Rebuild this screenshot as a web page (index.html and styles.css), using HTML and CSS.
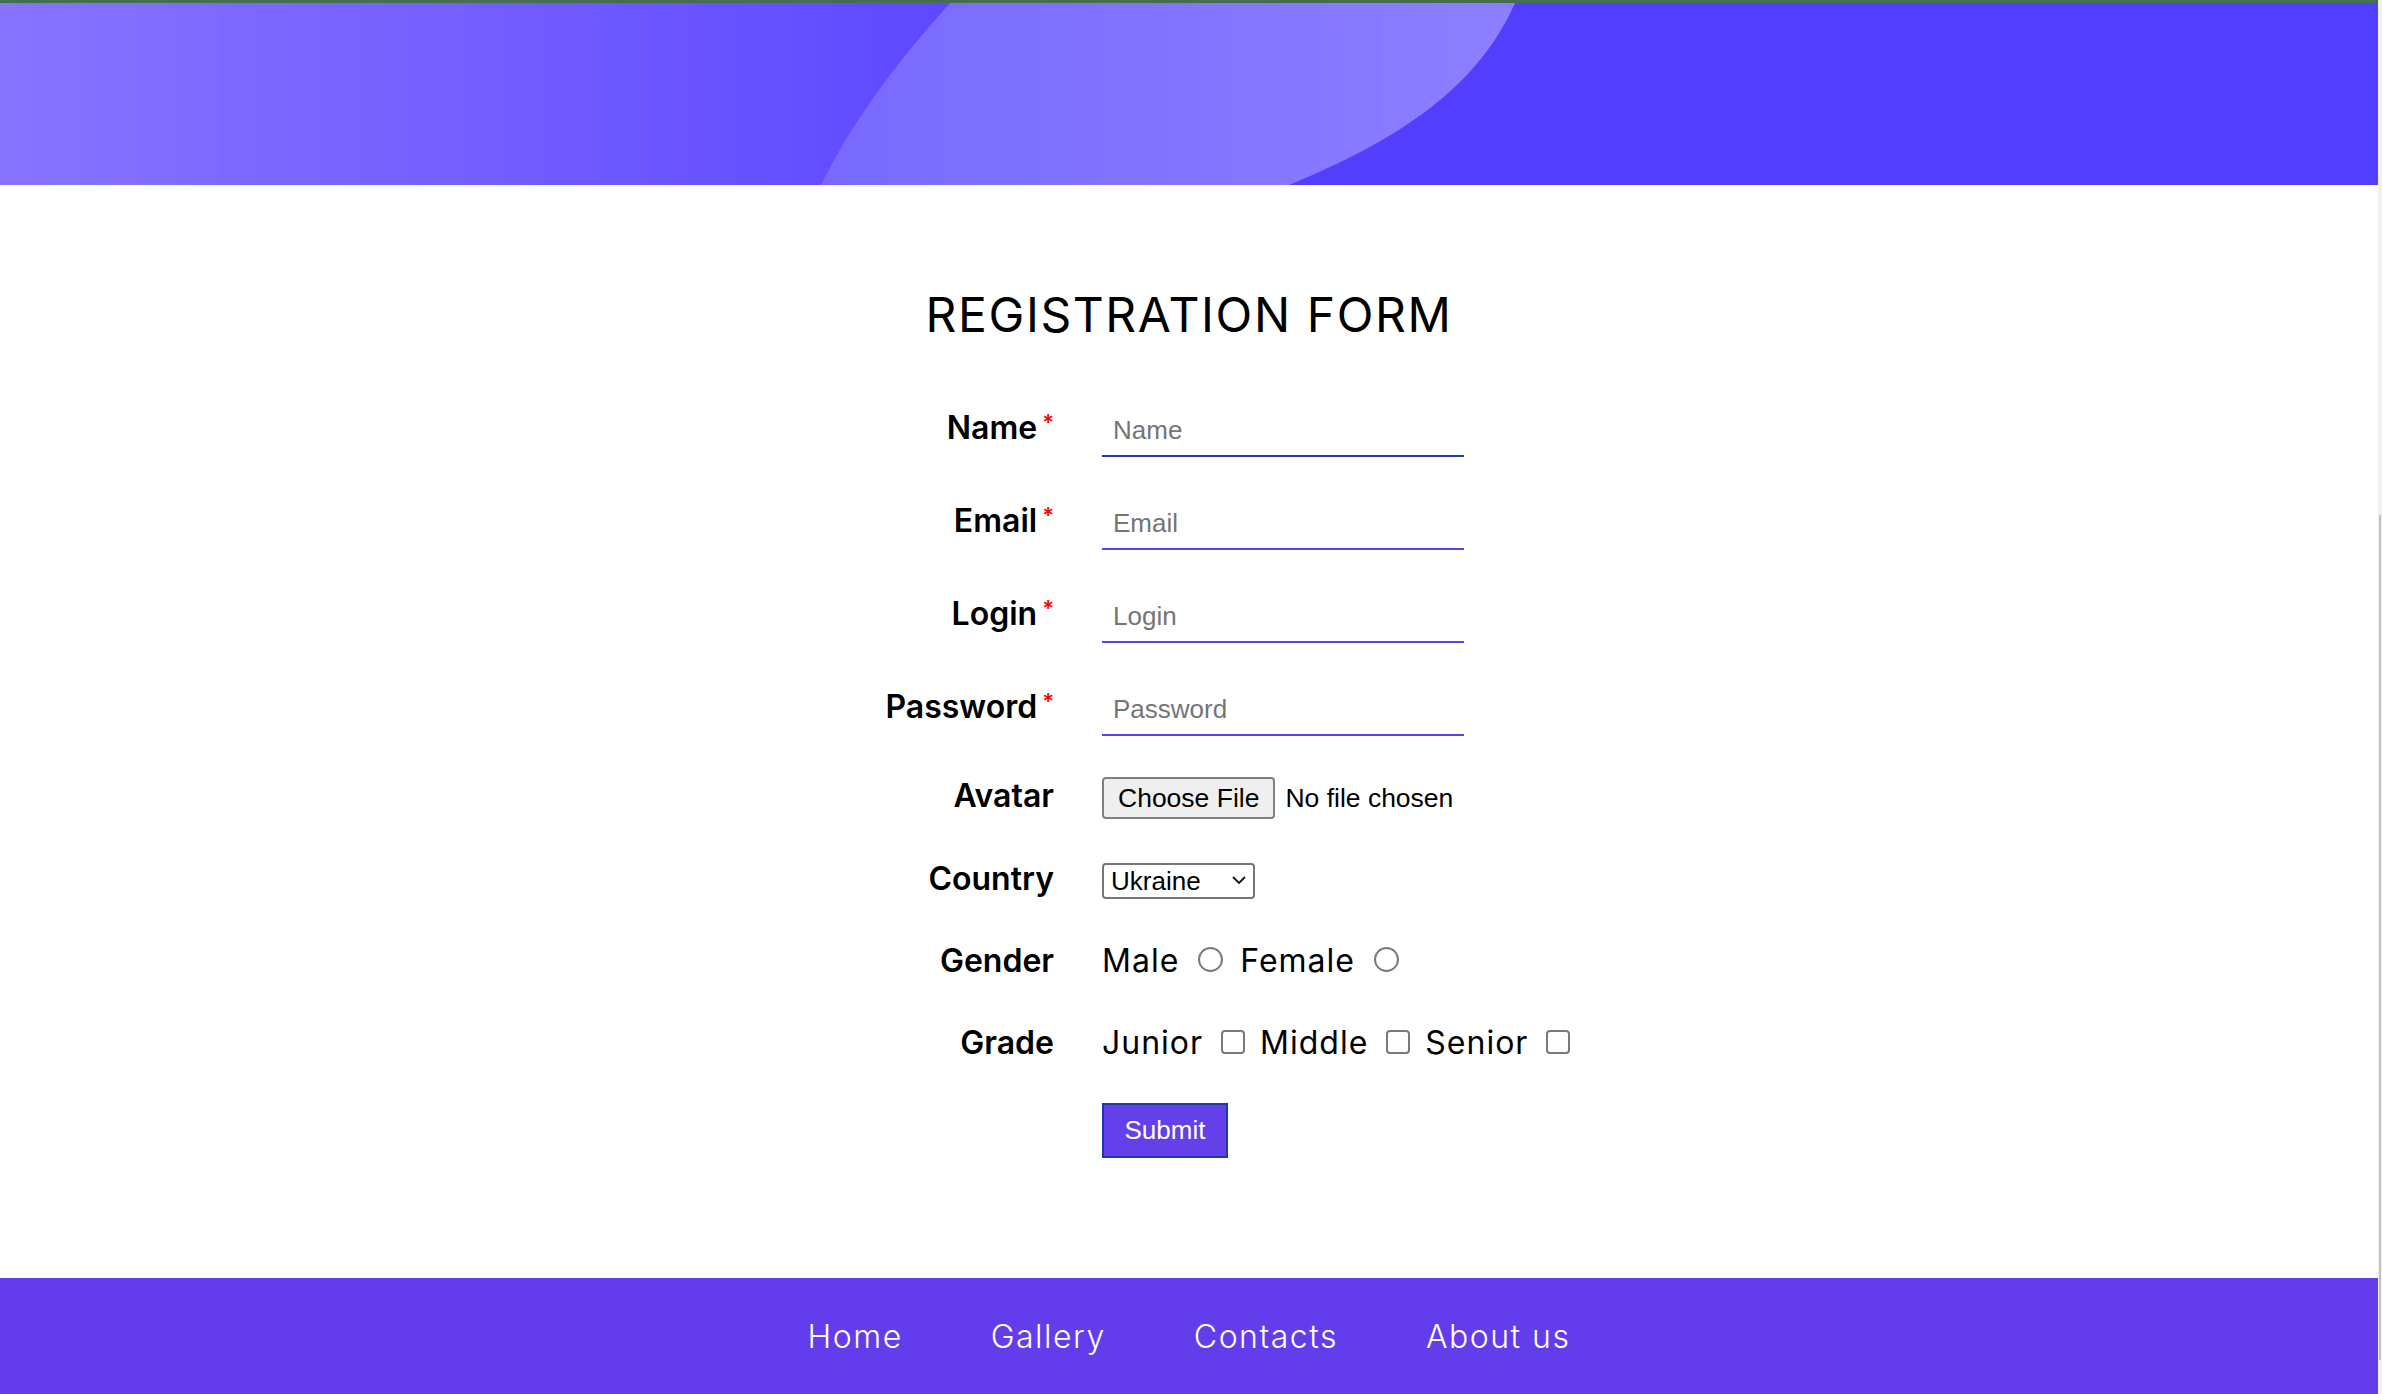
FILE: index.html
```html
<!DOCTYPE html>
<html lang="en">
<head>
<meta charset="utf-8">
<title>Registration form</title>
<link rel="stylesheet" href="styles.css">
</head>
<body>
<header class="hero">
  <svg class="hero-art" viewBox="0 0 2378 182" preserveAspectRatio="none" aria-hidden="true">
    <defs>
      <linearGradient id="gl" x1="0" y1="0" x2="1" y2="0">
        <stop offset="0" stop-color="#8874ff"/>
        <stop offset="1" stop-color="#5f48ff"/>
      </linearGradient>
      <linearGradient id="gb" x1="0" y1="0" x2="1" y2="0">
        <stop offset="0" stop-color="#786aff"/>
        <stop offset="1" stop-color="#8d7fff"/>
      </linearGradient>
    </defs>
    <rect width="2378" height="182" fill="#523eff"/>
    <path d="M0 0 H950 Q862 97 821 182 H0 Z" fill="url(#gl)"/>
    <path d="M950 0 H1515 C1475 90 1390 140 1289 182 H821 Q862 97 950 0 Z" fill="url(#gb)"/>
  </svg>
</header>

<main class="main">
  <h1 class="title">REGISTRATION FORM</h1>
  <form class="form" onsubmit="return false">
    <div class="row row-text">
      <label class="label" for="name">Name<span class="req">*</span></label>
      <div class="control"><input class="text-input active" id="name" type="text" placeholder="Name"></div>
    </div>
    <div class="row row-text">
      <label class="label" for="email">Email<span class="req">*</span></label>
      <div class="control"><input class="text-input" id="email" type="email" placeholder="Email"></div>
    </div>
    <div class="row row-text">
      <label class="label" for="login">Login<span class="req">*</span></label>
      <div class="control"><input class="text-input" id="login" type="text" placeholder="Login"></div>
    </div>
    <div class="row row-password">
      <label class="label" for="password">Password<span class="req">*</span></label>
      <div class="control"><input class="text-input" id="password" type="password" placeholder="Password"></div>
    </div>
    <div class="row row-avatar">
      <label class="label" for="avatar">Avatar</label>
      <div class="control"><input class="file-input" id="avatar" type="file"></div>
    </div>
    <div class="row row-country">
      <label class="label" for="country">Country</label>
      <div class="control">
        <span class="select-wrap">
          <select class="select" id="country">
            <option>Ukraine</option>
            <option>Poland</option>
            <option>Germany</option>
          </select>
          <svg class="chevron" viewBox="0 0 14 8" aria-hidden="true"><path d="M1 1 L7 7 L13 1" fill="none" stroke="#111" stroke-width="1.8"/></svg>
        </span>
      </div>
    </div>
    <div class="row row-gender">
      <span class="label">Gender</span>
      <div class="control">
        <label class="opt">Male<input class="radio" type="radio" name="gender"></label><label class="opt">Female<input class="radio" type="radio" name="gender"></label>
      </div>
    </div>
    <div class="row row-grade">
      <span class="label">Grade</span>
      <div class="control">
        <label class="opt">Junior<input class="check" type="checkbox"></label><label class="opt">Middle<input class="check" type="checkbox"></label><label class="opt">Senior<input class="check" type="checkbox"></label>
      </div>
    </div>
    <div class="row row-submit">
      <span class="label"></span>
      <div class="control"><button class="submit" type="submit">Submit</button></div>
    </div>
  </form>
</main>

<footer class="footer">
  <nav class="nav">
    <a class="nav-link" href="#">Home</a>
    <a class="nav-link" href="#">Gallery</a>
    <a class="nav-link" href="#">Contacts</a>
    <a class="nav-link" href="#">About us</a>
  </nav>
</footer>

<div class="scrollbar" aria-hidden="true"><div class="scrollbar-thumb"></div></div>
</body>
</html>
```
FILE: styles.css
```css
* { box-sizing: border-box; }

html, body { height: 100%; }

body {
  margin: 0 4px 0 0;
  background: #ffffff;
  font-family: Inter, "Noto Sans", sans-serif;
  color: #000;
  overflow: hidden;
}

.hero {
  height: 185px;
  border-top: 3px solid #44704d;
}

.hero-art {
  display: block;
  width: 100%;
  height: 182px;
}

.main {
  padding: 101px 0 120px;
}

.title {
  margin: 0;
  text-align: center;
  font-family: Inter, sans-serif;
  font-weight: 400;
  font-size: 48px;
  line-height: 58px;
  letter-spacing: 1.6px;
  color: #000;
}

.form {
  width: 1070px;
  margin: 58px auto 0;
}

.row {
  display: grid;
  grid-template-columns: 400px 622px;
  column-gap: 48px;
  align-items: baseline;
}

.row-text { height: 93px; }
.row-password { height: 95px; }
.row-avatar { height: 83px; }
.row-country { height: 82px; }
.row-gender { height: 82px; }
.row-grade { height: 79.6px; }
.row-submit { height: 55px; }

.label {
  text-align: right;
  font-family: Inter, sans-serif;
  font-weight: 600;
  font-size: 32px;
  line-height: 40px;
  color: #000;
}

.req {
  color: #ff0000;
  font-size: 22px;
  font-weight: 600;
  margin-left: 5px;
  vertical-align: 9px;
}

.control {
  line-height: 40px;
}

.text-input {
  display: block;
  width: 362px;
  border: 0;
  border-bottom: 2px solid #6040e5;
  padding: 8px 11px 10px;
  font-family: "Liberation Sans", Arial, sans-serif;
  font-size: 26px;
  line-height: 30px;
  color: #000;
  background: transparent;
  outline: none;
}

.text-input.active { border-bottom-color: #1c3aa9; }

.text-input::placeholder { color: #757575; }

.file-input {
  font-family: "Liberation Sans", Arial, sans-serif;
  font-size: 26.5px;
  line-height: 30px;
  color: #000;
}

.file-input::file-selector-button {
  font: inherit;
  line-height: 30px;
  padding: 4px 14px;
  margin-right: 10px;
  border: 2px solid #808080;
  border-radius: 4px;
  background: #efefef;
  color: #000;
}

.select-wrap {
  position: relative;
  display: inline-block;
}

.select {
  appearance: none;
  -webkit-appearance: none;
  width: 153px;
  height: 36px;
  padding: 0 30px 0 7px;
  border: 2px solid #767676;
  border-radius: 4px;
  background: #fff;
  font-family: "Liberation Sans", Arial, sans-serif;
  font-size: 26px;
  color: #000;
}

.chevron {
  position: absolute;
  right: 9px;
  top: 13px;
  width: 14px;
  height: 8px;
  pointer-events: none;
}

.opt {
  font-family: Inter, sans-serif;
  font-weight: 400;
  font-size: 32px;
  line-height: 40px;
  letter-spacing: 1px;
  color: #000;
}

.radio, .check {
  appearance: none;
  -webkit-appearance: none;
  display: inline-block;
  width: 24px;
  height: 24px;
  margin: 0 15px 0 18px;
  border: 2px solid #7a7a7a;
  background: #fff;
  vertical-align: baseline;
}

.radio { border-radius: 50%; width: 25px; height: 25px; margin-right: 17px; margin-left: 19px; }
.check { border-radius: 4px; }

.submit {
  font-family: "Liberation Sans", Arial, sans-serif;
  font-size: 26px;
  line-height: 30px;
  padding: 10.5px 20.5px;
  color: #fff;
  background: #6340ea;
  border: 2px solid #1f3aa8;
  border-radius: 0;
}

.footer {
  height: 118px;
  background: #633ceb;
  display: flex;
  align-items: center;
  justify-content: center;
}

.nav {
  display: flex;
  gap: 88px;
}

.nav-link {
  font-family: Inter, sans-serif;
  font-weight: 300;
  font-size: 32px;
  line-height: 40px;
  letter-spacing: 1.5px;
  color: #fff;
  text-decoration: none;
}

.scrollbar {
  position: fixed;
  top: 0;
  right: 0;
  width: 4px;
  height: 100vh;
  background: #f1f1f1;
}

.scrollbar-thumb {
  margin: 515px 0 0 1px;
  width: 2px;
  height: 845px;
  background: #c1c1c1;
}
```
